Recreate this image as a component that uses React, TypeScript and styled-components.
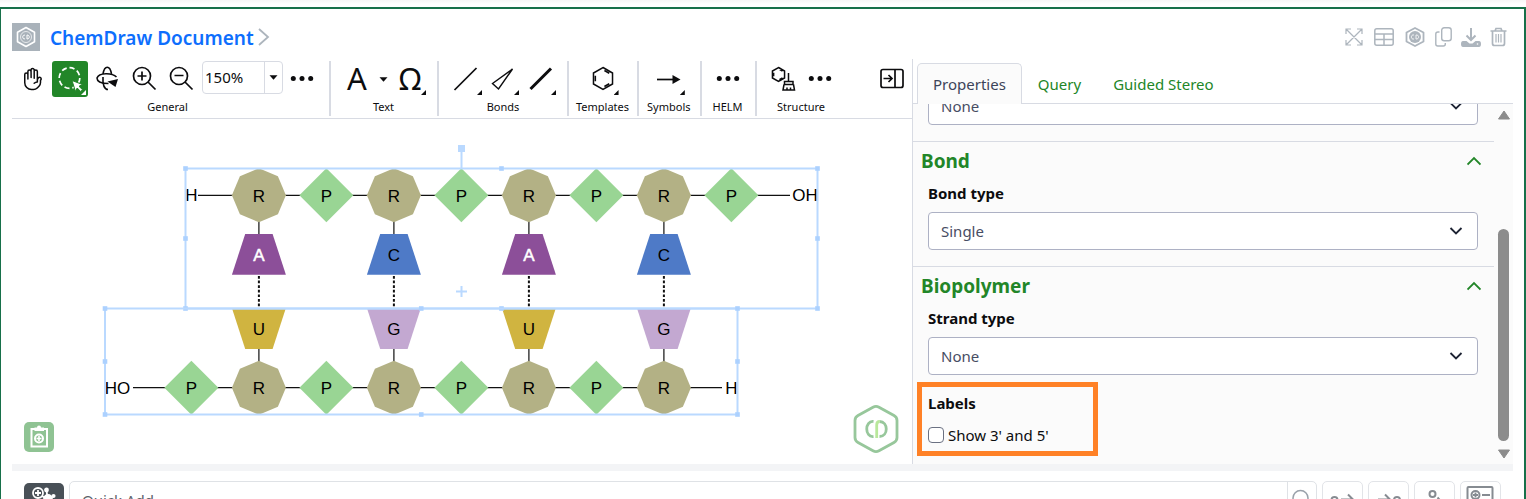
import React from 'react';
import styled, { createGlobalStyle } from 'styled-components';
import { HiOutlineHandRaised } from 'react-icons/hi2';

const line = '#d8dbe3';
const green = '#228628';

const GlobalStyle = createGlobalStyle`
  *, *::before, *::after { box-sizing: border-box; }
  body {
    margin: 0;
    overflow: hidden;
    background: #fff;
    color: #0c0c0e;
    font-family: "Noto Sans", "Open Sans", sans-serif;
    font-size: 15px;
  }
  button, input, select { font: inherit; color: inherit; }
  button { border: 0; padding: 0; background: none; cursor: pointer; }
  svg { display: block; flex: none; }
`;

const Page = styled.div`
  display: flex;
  flex-direction: column;
  height: 100vh;
`;

const TopShade = styled.div`
  flex: none;
  height: 7px;
  background: linear-gradient(#f6f6f6, #fff 4px);
`;

const Shell = styled.main`
  flex: 1;
  min-height: 0;
  overflow: hidden;
  border: solid #17704a;
  border-width: 2px 2px 0 1px;
  padding: 0 11px;
`;

const Header = styled.header`
  display: flex;
  align-items: center;
  padding: 14px 6px 8px 0;
`;

const DocBadge = styled.span`
  display: flex;
  width: 28px;
  height: 28px;
  margin-right: 10px;
  background: #a9b2ba;
`;

const DocTitle = styled.a`
  height: 28px;
  margin-right: 4px;
  color: #0d6efd;
  font-size: 19px;
  line-height: 30px;
  font-weight: 600;
  text-decoration: none;
`;

const HeaderActions = styled.div`
  display: flex;
  align-items: center;
  gap: 9px;
  margin-left: auto;
  color: #adb5bd;
`;

const Workspace = styled.section`
  display: grid;
  grid-template-columns: minmax(0, 1fr) 601px;
  height: calc(100vh - 94px);
  min-height: 320px;
`;

const Editor = styled.div`
  display: flex;
  flex-direction: column;
  min-height: 0;
`;

const Toolbar = styled.div`
  display: flex;
  flex: none;
  padding: 2px 2px 2px 0;
  border-bottom: 1px solid ${line};
`;

const Group = styled.div<{ $pad: string; $last?: boolean }>`
  display: flex;
  flex-direction: column;
  align-items: center;
  height: 55px;
  padding: ${(p) => p.$pad};
  border-right: ${(p) => (p.$last ? 'none' : `2px solid ${line}`)};
`;

const Tools = styled.div`
  display: flex;
  gap: 1px;
  height: 36px;
`;

const GroupLabel = styled.span`
  font-size: 11px;
  line-height: 20px;
  white-space: nowrap;
`;

const ToolButton = styled.button<{ $active?: boolean; $narrow?: boolean }>`
  position: relative;
  display: flex;
  align-items: center;
  justify-content: center;
  width: ${(p) => (p.$narrow ? 15 : 36)}px;
  height: 36px;
  border-radius: 3px;
  background: ${(p) => (p.$active ? green : 'transparent')};
  color: ${(p) => (p.$active ? '#fff' : '#0c0c0e')};
`;

const Corner = styled.span`
  position: absolute;
  right: 2px;
  bottom: 2px;
  width: 5px;
  height: 5px;
  background: currentColor;
  clip-path: polygon(100% 0, 100% 100%, 0 100%);
`;

const Glyph = styled.span`
  height: 36px;
  font-size: 31px;
  line-height: 34px;
`;

const Zoom = styled.div`
  display: flex;
  width: 81px;
  height: 33px;
  margin-left: 2px;
  border: 1px solid ${line};
  border-radius: 4px;
`;

const ZoomInput = styled.input`
  width: 62px;
  padding: 0 2px 2px;
  border: 0;
  border-right: 1px solid ${line};
  background: none;
  outline: none;
`;

const ZoomArrow = styled.button`
  display: flex;
  flex: 1;
  align-items: center;
  justify-content: center;
`;

const CollapseSlot = styled.div`
  margin-left: auto;
`;

const Canvas = styled.div`
  position: relative;
  flex: 1;
  min-height: 0;
  overflow: hidden;
`;

const PasteButton = styled.button`
  position: absolute;
  left: 12px;
  bottom: 12px;
  width: 30px;
  height: 30px;
  border-radius: 5px;
  background: #8fc393;
`;

const Watermark = styled.span`
  position: absolute;
  right: 13px;
  bottom: 10px;
`;

const Sidebar = styled.aside`
  display: flex;
  flex-direction: column;
  min-height: 0;
  border-left: 1px solid ${line};
`;

const Tabs = styled.div`
  display: flex;
  flex: none;
  padding: 4px 0 0 4px;
  border-bottom: 1px solid ${line};
`;

const Tab = styled.button<{ $active?: boolean }>`
  height: 41px;
  margin-bottom: -1px;
  padding: 0 15px;
  border: 1px solid ${(p) => (p.$active ? line : 'transparent')};
  border-bottom: 0;
  border-radius: 5px 5px 0 0;
  background: ${(p) => (p.$active ? '#fbfbfb' : 'transparent')};
  color: ${(p) => (p.$active ? '#3d4459' : green)};
`;

const Scroller = styled.div`
  display: flex;
  flex: 1 1 0;
  min-height: 0;
  background: #fbfbfb;
`;

const PanelBody = styled.div`
  display: flex;
  flex: 1;
  flex-direction: column;
  justify-content: flex-end;
  overflow: hidden;
  padding-bottom: 8px;
`;

const Section = styled.section`
  flex: none;
  padding-top: 5px;
  border-top: 1px solid ${line};
`;

const SectionHead = styled.button`
  display: flex;
  align-items: center;
  justify-content: space-between;
  width: 100%;
  height: 28px;
  margin-bottom: 7px;
  padding: 0 13px 0 8px;
  color: ${green};
  font-size: 19px;
  font-weight: 700;
`;

const Field = styled.div<{ $last?: boolean }>`
  flex: none;
  padding: 0 16px ${(p) => (p.$last ? 7 : 16)}px 15px;
`;

const FieldLabel = styled.label`
  display: block;
  height: 22px;
  margin-bottom: 8px;
  line-height: 22px;
  font-weight: 700;
`;

const SelectWrap = styled.div`
  display: grid;
  align-items: center;
  > * { grid-area: 1 / 1; }
  > svg { justify-self: end; margin-right: 15px; pointer-events: none; }
`;

const Select = styled.select`
  width: 100%;
  height: 38px;
  padding: 0 12px;
  border: 1px solid #adb1c4;
  border-radius: 4px;
  background: #fff;
  color: #474d63;
  appearance: none;
`;

const LabelsBox = styled.fieldset`
  width: 181px;
  margin: 0 0 0 4px;
  padding: 5px 6px 4px;
  border: 5px solid #ff8126;
`;

const LabelsTitle = styled.div`
  height: 22px;
  margin-bottom: 9px;
  line-height: 22px;
  font-weight: 700;
`;

const CheckLabel = styled.label`
  display: flex;
  align-items: center;
  gap: 4px;
  height: 24px;
  white-space: nowrap;
`;

const Check = styled.input`
  appearance: none;
  width: 16px;
  height: 16px;
  margin: 0;
  border: 1px solid #6b7182;
  border-radius: 4px;
  background: #fff;
`;

const Track = styled.div`
  display: flex;
  flex: none;
  flex-direction: column;
  align-items: center;
  justify-content: space-between;
  width: 19px;
  padding: 6px 0 5px;
`;

const Thumb = styled.div`
  width: 11px;
  height: 212px;
  margin: auto 0 8px;
  border-radius: 6px;
  background: #8c8c8c;
`;

const Divider = styled.div`
  height: 7px;
  background: #f3f4f6;
`;

const QuickRow = styled.form`
  display: flex;
  gap: 5px;
  padding: 10px 12px 0;
`;

const DarkButton = styled.button`
  width: 40px;
  height: 36px;
  margin-top: 2px;
  border-radius: 5px;
  background: #495057;
`;

const QuickBox = styled.div`
  display: flex;
  flex: 1;
  height: 38px;
  border: 1px solid #dfe2e6;
  border-radius: 5px;
`;

const QuickInput = styled.input`
  flex: 1;
  min-width: 0;
  padding: 0 12px;
  border: 0;
  background: none;
  outline: none;
  &::placeholder { color: #5c6269; opacity: 1; }
`;

const SearchButton = styled.button`
  width: 29px;
  border-left: 1px solid #dfe2e6;
`;

const BoxButton = styled.button`
  display: flex;
  justify-content: center;
  width: 41px;
  height: 38px;
  border: 1px solid #e2e4e8;
  border-radius: 5px;
`;

const Dots = () => (
  <svg width="36" height="36" fill="currentColor">
    <circle cx="9.300" cy="17.500" r="2.500" />
    <circle cx="18" cy="17.500" r="2.500" />
    <circle cx="26.700" cy="17.500" r="2.500" />
  </svg>
);

const DownCaret = () => (
  <svg width="9" height="5"><path d="M.5 .3h8L4.500 4.700z" fill="currentColor" /></svg>
);

const Chevron = ({ up }: { up?: boolean }) => (
  <svg width="14" height="10" fill="none" stroke={up ? green : '#1d2333'} strokeWidth="1.800">
    <path d={up ? 'M.5 8.500L7 2l6.500 6.500' : 'M1.500 2L7 7.500 12.500 2'} />
  </svg>
);

const Benzene = ({ x, y, r }: { x: number; y: number; r: number }) => {
  const at = (deg: number, k: number) => {
    const a = (deg * Math.PI) / 180;
    return `${(x + r * k * Math.cos(a)).toFixed(2)} ${(y + r * k * Math.sin(a)).toFixed(2)}`;
  };
  const ring = [-90, -30, 30, 90, 150, 210].map((d) => at(d, 1)).join('L');
  return (
    <path
      d={`M${ring}ZM${at(-80, 0.74)}L${at(-40, 0.74)}M${at(40, 0.74)}L${at(80, 0.74)}M${at(160, 0.74)}L${at(200, 0.74)}`}
    />
  );
};

type ToolProps = { label: string; active?: boolean; corner?: boolean; narrow?: boolean; children: React.ReactNode };
const Tool = ({ label, active, corner, narrow, children }: ToolProps) => (
  <ToolButton type="button" aria-label={label} $active={active} $narrow={narrow}>
    {children}
    {corner && <Corner />}
  </ToolButton>
);

const Ink = ({ w = 1.7, children }: { w?: number; children: React.ReactNode }) => (
  <svg width="36" height="36" fill="none" stroke="currentColor" strokeWidth={w}>{children}</svg>
);

const EditorToolbar = () => (
  <Toolbar>
    <Group $pad="0 9px 0 3px">
      <Tools>
        <Tool label="Pan"><HiOutlineHandRaised size={24} /></Tool>
        <Tool label="Lasso" active corner>
          <Ink>
            <circle cx="17.500" cy="17" r="10.300" strokeDasharray="5.200 2.900" pathLength={64.8} />
            <path d="M20 19.500l10.500 4-3.500 1.800 3.500 3.400-1.800 1.800-3.500-3.500-1.700 3.500z" fill="currentColor" stroke={green} strokeWidth="1" />
          </Ink>
        </Tool>
        <Tool label="Rotate 3D">
          <Ink w={1.6}>
            <path d="M27.500 16C23 11.500 10 11.500 8 17C8 21 13 22.500 19.500 22.500" />
            <path d="M22.500 13C21 4 15.500 4 14 13M14 16C13.500 23 15 28.500 19 28.500" />
            <path d="M18.500 20.500L29 18l-2.500 8z" fill="currentColor" stroke="none" />
          </Ink>
        </Tool>
        <Tool label="Zoom in">
          <Ink><circle cx="16" cy="15" r="8.500" /><path d="M22 21l7.500 7.500M11.500 15h9M16 10.500v9" /></Ink>
        </Tool>
        <Tool label="Zoom out">
          <Ink><circle cx="16" cy="15" r="8.500" /><path d="M22 21l7.500 7.500M11.500 14.500h9" /></Ink>
        </Tool>
        <Zoom>
          <ZoomInput aria-label="Zoom level" defaultValue="150%" />
          <ZoomArrow type="button" aria-label="Choose zoom"><DownCaret /></ZoomArrow>
        </Zoom>
        <Tool label="More general tools"><Dots /></Tool>
      </Tools>
      <GroupLabel>General</GroupLabel>
    </Group>
    <Group $pad="0 9px 0 8px">
      <Tools>
        <Tool label="Text"><Glyph>A</Glyph></Tool>
        <Tool label="Text options" narrow><DownCaret /></Tool>
        <Tool label="Special characters" corner><Glyph>Ω</Glyph></Tool>
      </Tools>
      <GroupLabel>Text</GroupLabel>
    </Group>
    <Group $pad="0 9px">
      <Tools>
        <Tool label="Solid bond" corner><Ink><path d="M6.500 29l22-22" /></Ink></Tool>
        <Tool label="Wedge bond" corner><Ink w={1.4}><path d="M27.500 8L7.500 22.500l6 5.500z" /></Ink></Tool>
        <Tool label="Bold bond" corner><Ink w={3}><path d="M8.500 28L29 7.500" /></Ink></Tool>
      </Tools>
      <GroupLabel>Bonds</GroupLabel>
    </Group>
    <Group $pad="0 8px 0 7px">
      <Tools>
        <Tool label="Templates" corner><Ink w={1.5}><Benzene x={18} y={17.5} r={11} /></Ink></Tool>
      </Tools>
      <GroupLabel>Templates</GroupLabel>
    </Group>
    <Group $pad="0 9px 0 8px">
      <Tools>
        <Tool label="Symbols" corner>
          <Ink><path d="M6 18.500h17" /><path d="M21.500 14l8 4.500-8 4.500z" fill="currentColor" stroke="none" /></Ink>
        </Tool>
      </Tools>
      <GroupLabel>Symbols</GroupLabel>
    </Group>
    <Group $pad="0 9px 0 8px">
      <Tools><Tool label="HELM tools"><Dots /></Tool></Tools>
      <GroupLabel>HELM</GroupLabel>
    </Group>
    <Group $pad="0 8px" $last>
      <Tools>
        <Tool label="Clean up structure">
          <Ink w={1.5}>
            <Benzene x={13.5} y={13.5} r={7} />
            <path d="M23.500 12v8.500M19.500 20.500h8.500v3h-8.500zM19 23.500l-1 5.500h11.500l-1-5.500M22 29v-2.500M25.500 29v-2.500" />
          </Ink>
        </Tool>
        <Tool label="More structure tools"><Dots /></Tool>
      </Tools>
      <GroupLabel>Structure</GroupLabel>
    </Group>
    <CollapseSlot>
      <Tool label="Collapse panel">
        <Ink>
          <rect x="7" y="8.500" width="22" height="18" rx="2" />
          <path d="M21 8.500v18M9.500 17.500h8M14.500 14l3.500 3.500-3.500 3.500" />
        </Ink>
      </Tool>
    </CollapseSlot>
  </Toolbar>
);

const TOP = 76.3;
const LOW = 268.7;
const col = (k: number) => 246.9 + 67.5 * k;

const Letter = styled.text<{ $light?: boolean }>`
  font-family: "Liberation Sans", sans-serif;
  font-size: 17px;
  text-anchor: middle;
  fill: ${(p) => (p.$light ? '#fff' : '#000')};
  stroke: ${(p) => (p.$light ? '#fff' : 'none')};
  stroke-width: 0.5px;
`;

const Sugar = ({ x, y }: { x: number; y: number }) => {
  const r = 27;
  const d = 19;
  return (
    <>
      <path fill="#b3b185" d={`M${x} ${y - r}L${x + d} ${y - d}L${x + r} ${y}L${x + d} ${y + d}L${x} ${y + r}L${x - d} ${y + d}L${x - r} ${y}L${x - d} ${y - d}Z`} />
      <Letter x={x} y={y + 6.3}>R</Letter>
    </>
  );
};

const Phosphate = ({ x, y }: { x: number; y: number }) => (
  <>
    <path fill="#99d594" d={`M${x} ${y - 27}l27 27-27 27-27-27z`} />
    <Letter x={x} y={y + 6.3}>P</Letter>
  </>
);

const Handles = ({ x, y, w, h }: { x: number; y: number; w: number; h: number }) => (
  <>
    <rect x={x} y={y} width={w} height={h} fill="none" stroke="#bad9ff" strokeWidth="2" />
    {[0, 0.5, 1].flatMap((i) =>
      [0, 0.5, 1]
        .filter((j) => i !== 0.5 || j !== 0.5)
        .map((j) => (
          <rect key={`${i}-${j}`} x={x + w * i - 2.3} y={y + h * j - 2.3} width="4.600" height="4.600" fill="#acd1ff" />
        )),
    )}
  </>
);

const TOP_BASES = [['A', '#8c4f99'], ['C', '#4e7ac7'], ['A', '#8c4f99'], ['C', '#4e7ac7']];
const LOW_BASES = [['U', '#d0b440'], ['G', '#c3a8d1'], ['U', '#d0b440'], ['G', '#c3a8d1']];

const Duplex = () => (
  <svg width="100%" height="100%" role="img" aria-label="Double stranded biopolymer">
    <g stroke="#111" strokeWidth="1.200">
      <path d={`M186 ${TOP}H778M121 ${LOW}H710`} />
      {[0, 2, 4, 6].map((k) => (
        <g key={k}>
          <path d={`M${col(k)} ${TOP}V116M${col(k)} 228V${LOW}`} />
          <path d={`M${col(k)} 157V189`} strokeWidth="2" strokeDasharray="2.700 1.900" />
        </g>
      ))}
    </g>
    {[0, 2, 4, 6].map((k) => <Sugar key={k} x={col(k)} y={TOP} />)}
    {[1, 3, 5, 7].map((k) => <Phosphate key={k} x={col(k)} y={TOP} />)}
    {[0, 2, 4, 6].map((k) => <Sugar key={k} x={col(k)} y={LOW} />)}
    {[-1, 1, 3, 5].map((k) => <Phosphate key={k} x={col(k)} y={LOW} />)}
    {TOP_BASES.map(([name, fill], i) => (
      <g key={i}>
        <path fill={fill} d={`M${col(i * 2) - 13.7} 115h27.400l13.300 40.700h-54z`} />
        <Letter x={col(i * 2)} y={142} $light={name === 'A'}>{name}</Letter>
      </g>
    ))}
    {LOW_BASES.map(([name, fill], i) => (
      <g key={i}>
        <path fill={fill} d={`M${col(i * 2) - 27} 189h54l-13.300 41h-27.400z`} />
        <Letter x={col(i * 2)} y={216}>{name}</Letter>
      </g>
    ))}
    <Letter x={179.5} y={82}>H</Letter>
    <Letter x={793} y={82}>OH</Letter>
    <Letter x={105.5} y={275}>HO</Letter>
    <Letter x={719.5} y={275}>H</Letter>
    <Handles x={173.5} y={49.5} w={632} h={140} />
    <Handles x={93} y={189.5} w={632.5} h={106} />
    <path d="M449.500 32v17M449.500 167v11M444 172.500h11" stroke="#bad9ff" strokeWidth="2" />
    <rect x="446" y="26" width="7" height="7" fill="#bad9ff" />
  </svg>
);

const ActionButton = styled.button<{ $w: number }>`
  display: flex;
  justify-content: center;
  width: ${(p) => p.$w}px;
`;

const HeaderIcons = () => (
  <HeaderActions>
    <ActionButton $w={20} aria-label="Expand">
      <svg width="18" height="18" fill="none" stroke="currentColor" strokeWidth="1.200">
        <path d="M1 1l16 16M17 1L1 17M1 6V1h5M12 1h5v5M17 12v5h-5M6 17H1v-5" />
      </svg>
    </ActionButton>
    <ActionButton $w={22} aria-label="Table">
      <svg width="20" height="18" fill="none" stroke="currentColor" strokeWidth="1.500">
        <rect x=".8" y=".8" width="18.400" height="16.400" rx="2" /><path d="M1 6h18M1 11.500h18M10 6v11" />
      </svg>
    </ActionButton>
    <ActionButton $w={22} aria-label="ChemDraw">
      <svg width="20" height="20" fill="none" stroke="currentColor" strokeWidth="1.800">
        <path d="M10 1L18.500 5.500v9L10 19l-8.500-4.500v-9z" strokeLinejoin="round" />
        <circle cx="10" cy="10" r="6" fill="currentColor" stroke="none" />
        <path d="M9 8c-3.500-1-3.500 5 0 4M11 8v4c3.500 .5 3.500-4.500 0-4z" stroke="#fff" strokeWidth=".8" />
      </svg>
    </ActionButton>
    <ActionButton $w={17} aria-label="Copy">
      <svg width="17" height="20" fill="none" stroke="currentColor" strokeWidth="1.400">
        <rect x="6.700" y=".8" width="9.500" height="13" rx="2.500" />
        <path d="M4.500 5H3Q.8 5 .8 7v10q0 2 2 2h5.500q2 0 2-2v-1" />
      </svg>
    </ActionButton>
    <ActionButton $w={20} aria-label="Download">
      <svg width="20" height="20" fill="none" stroke="currentColor" strokeWidth="2">
        <path d="M10 1v12M5.500 8.500L10 13l4.500-4.500" />
        <path d="M2 14h3.500l3 2.500h3l3-2.500H18q2 0 2 3t-2 3H2q-2 0-2-3t2-3z" fill="currentColor" stroke="none" />
        <circle cx="16.500" cy="17" r=".8" fill="#fff" stroke="none" />
      </svg>
    </ActionButton>
    <ActionButton $w={17} aria-label="Delete">
      <svg width="17" height="20" fill="none" stroke="currentColor" strokeWidth="1.700">
        <path d="M.5 4h16M5 4l1-2.500h5L12 4M2.500 4v12.500q0 2 2 2h8q2 0 2-2V4" />
        <path d="M6 7v8.500M8.500 7v8.500M11 7v8.500" strokeWidth="1.200" />
      </svg>
    </ActionButton>
  </HeaderActions>
);

export default function App() {
  return (
    <Page>
      <GlobalStyle />
      <TopShade />
      <Shell>
        <Header>
          <DocBadge>
            <svg width="28" height="28" fill="none" stroke="#fff" strokeLinejoin="round">
              <path d="M14 4.500l8.500 4.700v9.600L14 23.500l-8.500-4.700V9.200z" strokeWidth="1.600" />
              <circle cx="14" cy="14" r="5.500" strokeWidth=".7" />
              <path d="M13 12.200c-3-1-3 4.600 0 3.600M15 12v4c3 0 3-4 0-4z" />
            </svg>
          </DocBadge>
          <DocTitle href="#">ChemDraw Document</DocTitle>
          <svg width="12" height="18" fill="none" stroke="#adb5bd" strokeWidth="1.800"><path d="M1 1l9 8-9 8" /></svg>
          <HeaderIcons />
        </Header>

        <Workspace>
          <Editor>
            <EditorToolbar />
            <Canvas>
              <Duplex />
              <PasteButton aria-label="Paste">
                <svg width="30" height="30" fill="none" stroke="#fff" strokeWidth="2">
                  <path d="M11 7H7.500v17.500h15.500V7H19.500" />
                  <path d="M10.500 5.500h2.500a2 2 0 0 1 4 0h3V9h-9.500z" fill="#fff" stroke="none" />
                  <circle cx="15" cy="16.500" r="4" /><path d="M15 14v5M12.500 16.500h5" strokeWidth="1.600" />
                </svg>
              </PasteButton>
              <Watermark>
                <svg width="46" height="50" fill="none" stroke="#97c79b" strokeWidth="2.800" strokeLinejoin="round">
                  <path d="M20 3.200Q23 1.500 26 3.200L41 11.500Q44 13.200 44 16.500V33.500Q44 36.800 41 38.500L26 46.800Q23 48.500 20 46.800L5 38.500Q2 36.800 2 33.500V16.500Q2 13.200 5 11.500Z" />
                  <path d="M20.500 17.500c-9-1-9 16 0 15M26.500 17.500c9 0 9 15 0 15" />
                  <path d="M23.700 34V21q0-3.500 3-3.500" stroke="#b9e89b" />
                </svg>
              </Watermark>
            </Canvas>
          </Editor>

          <Sidebar>
            <Tabs role="tablist">
              <Tab role="tab" aria-selected $active>Properties</Tab>
              <Tab role="tab">Query</Tab>
              <Tab role="tab">Guided Stereo</Tab>
            </Tabs>
            <Scroller>
              <PanelBody>
                <Field>
                  <SelectWrap>
                    <Select aria-label="Atom property"><option>None</option></Select>
                    <Chevron />
                  </SelectWrap>
                </Field>
                <Section>
                  <SectionHead type="button">Bond<Chevron up /></SectionHead>
                  <Field>
                    <FieldLabel htmlFor="bond-type">Bond type</FieldLabel>
                    <SelectWrap>
                      <Select id="bond-type"><option>Single</option></Select>
                      <Chevron />
                    </SelectWrap>
                  </Field>
                </Section>
                <Section>
                  <SectionHead type="button">Biopolymer<Chevron up /></SectionHead>
                  <Field $last>
                    <FieldLabel htmlFor="strand-type">Strand type</FieldLabel>
                    <SelectWrap>
                      <Select id="strand-type"><option>None</option></Select>
                      <Chevron />
                    </SelectWrap>
                  </Field>
                  <LabelsBox aria-labelledby="labels-title">
                    <LabelsTitle id="labels-title">Labels</LabelsTitle>
                    <CheckLabel><Check type="checkbox" />Show 3' and 5'</CheckLabel>
                  </LabelsBox>
                </Section>
              </PanelBody>
              <Track aria-hidden>
                <svg width="14" height="10"><path d="M7 1l5.500 8h-11z" fill="#8c8c8c" stroke="#8c8c8c" strokeLinejoin="round" /></svg>
                <Thumb />
                <svg width="14" height="10"><path d="M7 9l5.500-8h-11z" fill="#8c8c8c" stroke="#8c8c8c" strokeLinejoin="round" /></svg>
              </Track>
            </Scroller>
          </Sidebar>
        </Workspace>

        <Divider />
        <QuickRow>
          <DarkButton type="button" aria-label="Add structure">
            <svg width="40" height="36" fill="none" stroke="#fff" strokeWidth="1.800">
              <circle cx="14" cy="10" r="5" /><path d="M11 10h6M14 7v6M18 13l5 3M22.500 7l1 8M30 13l-6 3" />
              <circle cx="22.500" cy="7" r="1.500" fill="#fff" /><circle cx="24" cy="16" r="4" fill="#fff" /><circle cx="29.500" cy="13" r="1.200" fill="#fff" />
            </svg>
          </DarkButton>
          <QuickBox>
            <QuickInput aria-label="Quick Add" placeholder="Quick Add" />
            <SearchButton type="button" aria-label="Search">
              <svg width="28" height="36" fill="none" stroke="#99a1aa" strokeWidth="1.500"><circle cx="12.500" cy="16" r="7.500" /><path d="M18 22l5 5" /></svg>
            </SearchButton>
          </QuickBox>
          <BoxButton type="button" aria-label="Add product">
            <svg width="39" height="36" fill="none" stroke="#868b91" strokeWidth="2"><circle cx="11.500" cy="18" r="3" /><path d="M18 17.500h12M25 12.500l5 5-5 5" /></svg>
          </BoxButton>
          <BoxButton type="button" aria-label="Add reactant">
            <svg width="39" height="36" fill="none" stroke="#868b91" strokeWidth="2"><circle cx="28" cy="18" r="3" /><path d="M9 17.500h12M16 12.500l5 5-5 5" /></svg>
          </BoxButton>
          <BoxButton type="button" aria-label="Add reagent">
            <svg width="39" height="36" fill="none" stroke="#868b91" strokeWidth="2"><circle cx="17.500" cy="12" r="3" /><path d="M12 21h14M22.500 15.500l5 5.500-5 5" /></svg>
          </BoxButton>
          <BoxButton type="button" aria-label="Add table">
            <svg width="39" height="36" fill="none" stroke="#868b91" strokeWidth="2"><rect x="6.500" y="5" width="25" height="22" rx="1" /><circle cx="14.500" cy="13" r="4" /><path d="M12 13h5M14.500 10.500v5M21 13h8" strokeWidth="1.800" /></svg>
          </BoxButton>
        </QuickRow>
      </Shell>
    </Page>
  );
}
